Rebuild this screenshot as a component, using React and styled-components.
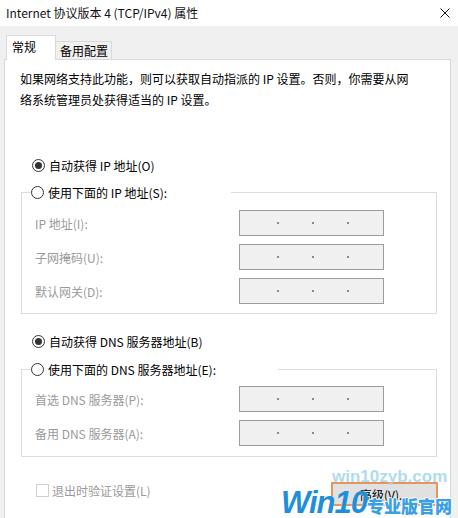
import React from 'react';
import styled, { createGlobalStyle } from 'styled-components';

const GlobalStyle = createGlobalStyle`
  html, body {
    margin: 0;
    padding: 0;
  }
  body {
    background: #f0f0f0;
    font-family: "Noto Sans CJK SC", "Noto Sans", sans-serif;
    font-size: 12px;
    color: #000;
  }
  * {
    box-sizing: border-box;
  }
`;

const Window = styled.div`
  position: relative;
  width: 458px;
  height: 518px;
  overflow: hidden;
  background: #f0f0f0;
  display: flex;
  flex-direction: column;
`;

const TitleBar = styled.div`
  flex: none;
  height: 26px;
  background: #fff;
  display: flex;
  align-items: center;
  justify-content: space-between;
  padding: 0 8px 0 6px;
  line-height: 1;
`;

const Title = styled.span`
  font-size: 12px;
  color: #111;
`;

const TabStrip = styled.div`
  flex: none;
  display: flex;
  align-items: flex-end;
  height: 33px;
  padding-left: 6px;
`;

const Tab = styled.div`
  position: relative;
  display: flex;
  align-items: flex-start;
  border: 1px solid #d9d9d9;
  border-bottom: none;
  line-height: 1;
  ${(p) =>
    p.$active
      ? `
    z-index: 1;
    width: 50px;
    height: 25px;
    margin-bottom: -1px;
    padding: 5px 0 0 5px;
    background: #fff;
  `
      : `
    width: 57px;
    height: 18px;
    margin-left: -1px;
    padding: 3px 0 0 4px;
    background: #f0f0f0;
  `}
`;

const Panel = styled.div`
  flex: 1;
  margin: 0 7px 0 4px;
  background: #fff;
  border: 1px solid #d9d9d9;
  border-bottom: none;
  display: flex;
  flex-direction: column;
`;

const Intro = styled.p`
  margin: 0;
  padding: 8px 0 0 15px;
  line-height: 21px;
  white-space: nowrap;
`;

const OptionRow = styled.div`
  display: flex;
  align-items: center;
  gap: 4px;
  height: 20px;
  margin: ${(p) => p.$top}px 0 0 27px;
`;

const Radio = styled.span`
  position: relative;
  flex: none;
  width: 13px;
  height: 13px;
  border: 1px solid #333;
  border-radius: 50%;
  background: #fff;

  &::after {
    content: "";
    display: ${(p) => (p.$checked ? 'block' : 'none')};
    position: absolute;
    left: 2px;
    top: 2px;
    width: 7px;
    height: 7px;
    border-radius: 50%;
    background: #333;
  }
`;

const Group = styled.fieldset`
  margin: ${(p) => p.$top}px 13px 0 16px;
  padding: ${(p) => p.$padTop}px 0 ${(p) => p.$padBottom}px 0;
  border: 1px solid #dcdcdc;
  min-width: 0;
`;

const Legend = styled.legend`
  display: flex;
  align-items: center;
  gap: 4px;
  height: 20px;
  width: ${(p) => p.$width}px;
  margin-left: 9px;
  padding: 0;
`;

const Fields = styled.div`
  display: grid;
  grid-template-columns: 204px 145px;
  row-gap: 8px;
  align-items: center;
  padding-left: 13px;
`;

const FieldLabel = styled.span`
  color: #9a9a9a;
`;

const AddressBox = styled.div`
  display: flex;
  align-items: center;
  gap: 33px;
  height: 26px;
  padding-left: 37px;
  background: #f0f0f0;
  border: 1px solid #9c9c9c;
`;

const Dot = styled.span`
  width: 2px;
  height: 2px;
  background: #8a8a8a;
`;

const Footer = styled.div`
  display: flex;
  justify-content: space-between;
  align-items: flex-start;
  margin: 23px 12px 0 31px;
`;

const CheckRow = styled.label`
  display: flex;
  align-items: center;
  gap: 3px;
  height: 20px;
  color: #9a9a9a;
`;

const CheckBox = styled.span`
  width: 13px;
  height: 13px;
  border: 1px solid #cfcfcf;
  background: #fff;
`;

const Button = styled.button`
  margin-top: 2px;
  width: 107px;
  height: 24px;
  padding: 0;
  font: inherit;
  color: #000;
  background: #e1e1e1;
  border: 2px solid #e9945c;
`;

const MarkSite = styled.div`
  position: absolute;
  left: 332px;
  top: 468px;
  font-family: "Liberation Sans", Arial, sans-serif;
  font-weight: bold;
  font-size: 17px;
  line-height: 17px;
  color: #a9d8ec;
  opacity: 0.9;
  pointer-events: none;
`;

const MarkBrand = styled.div`
  position: absolute;
  left: 281px;
  top: 488px;
  display: flex;
  align-items: baseline;
  white-space: nowrap;
  pointer-events: none;
`;

const MarkLatin = styled.span`
  font-family: "Liberation Sans", Arial, sans-serif;
  font-style: italic;
  font-weight: bold;
  font-size: 31px;
  line-height: 29px;
  letter-spacing: -1px;
  color: #1f8fd9;
  text-shadow: 0 0 1px #fff;
`;

const MarkCjk = styled.span`
  font-family: "Noto Sans CJK SC", sans-serif;
  font-weight: 900;
  font-size: 17px;
  line-height: 22px;
  color: #3aa0e2;
  text-shadow: -1px 0 #fff, 1px 0 #fff, 0 -1px #fff, 0 1px #fff;
`;

function CloseIcon() {
  return (
    <svg width="10" height="10" viewBox="0 0 10 10">
      <path d="M0.5 0.5 L9.5 9.5 M9.5 0.5 L0.5 9.5" stroke="#111" strokeWidth="1" />
    </svg>
  );
}

function Address() {
  return (
    <AddressBox>
      <Dot />
      <Dot />
      <Dot />
    </AddressBox>
  );
}

const ipFields = ['IP 地址(I):', '子网掩码(U):', '默认网关(D):'];
const dnsFields = ['首选 DNS 服务器(P):', '备用 DNS 服务器(A):'];

export default function App() {
  return (
    <>
      <GlobalStyle />
      <Window>
        <TitleBar>
          <Title>Internet 协议版本 4 (TCP/IPv4) 属性</Title>
          <CloseIcon />
        </TitleBar>

        <TabStrip>
          <Tab $active>常规</Tab>
          <Tab>备用配置</Tab>
        </TabStrip>

        <Panel>
          <Intro>
            如果网络支持此功能，则可以获取自动指派的 IP 设置。否则，你需要从网
            <br />
            络系统管理员处获得适当的 IP 设置。
          </Intro>

          <OptionRow $top={45}>
            <Radio $checked />
            自动获得 IP 地址(O)
          </OptionRow>
          <Group $top={7} $padTop={8} $padBottom={9}>
            <Legend $width={200}>
              <Radio />
              使用下面的 IP 地址(S):
            </Legend>
            <Fields>
              {ipFields.map((f) => (
                <React.Fragment key={f}>
                  <FieldLabel>{f}</FieldLabel>
                  <Address />
                </React.Fragment>
              ))}
            </Fields>
          </Group>

          <OptionRow $top={17}>
            <Radio $checked />
            自动获得 DNS 服务器地址(B)
          </OptionRow>
          <Group $top={8} $padTop={7} $padBottom={10}>
            <Legend $width={247}>
              <Radio />
              使用下面的 DNS 服务器地址(E):
            </Legend>
            <Fields>
              {dnsFields.map((f) => (
                <React.Fragment key={f}>
                  <FieldLabel>{f}</FieldLabel>
                  <Address />
                </React.Fragment>
              ))}
            </Fields>
          </Group>

          <Footer>
            <CheckRow>
              <CheckBox />
              退出时验证设置(L)
            </CheckRow>
            <Button>高级(V)...</Button>
          </Footer>
        </Panel>

        <MarkSite>win10zyb.com</MarkSite>
        <MarkBrand>
          <MarkLatin>Win10</MarkLatin>
          <MarkCjk>专业版官网</MarkCjk>
        </MarkBrand>
      </Window>
    </>
  );
}
